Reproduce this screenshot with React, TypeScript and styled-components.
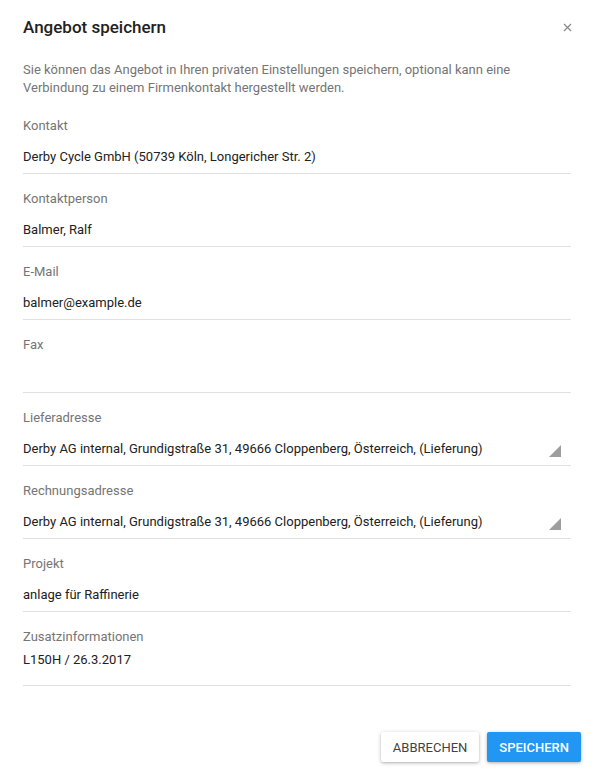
import React from 'react'
import styled, { createGlobalStyle } from 'styled-components'

const GlobalStyle = createGlobalStyle`
  html, body {
    margin: 0;
    padding: 0;
    background: #ffffff;
  }
  body {
    font-family: Roboto, 'Liberation Sans', Arial, sans-serif;
    -webkit-font-smoothing: antialiased;
  }
`

const Dialog = styled.div`
  width: 595px;
  height: 774px;
  box-sizing: border-box;
  background: #ffffff;
  display: flex;
  flex-direction: column;
`

const Header = styled.div`
  display: flex;
  align-items: center;
  justify-content: space-between;
  padding: 17px 22px 0 23px;
  height: 20px;
`

const Title = styled.h2`
  margin: 0;
  font-size: 17px;
  line-height: 20px;
  font-weight: 500;
  color: #212121;
`

const CloseButton = styled.button`
  border: none;
  background: none;
  padding: 0;
  width: 12px;
  height: 12px;
  display: flex;
  align-items: center;
  justify-content: center;
  cursor: pointer;
`

const Body = styled.div`
  padding: 24px 24px 0 23px;
  display: flex;
  flex-direction: column;
`

const Description = styled.p`
  margin: 0 0 21px;
  font-size: 13px;
  line-height: 18px;
  color: #757575;
`

const Field = styled.div`
  display: flex;
  flex-direction: column;
  margin-bottom: 17px;
`

const Label = styled.label`
  font-size: 13px;
  line-height: 16px;
  color: #757575;
`

const InputRow = styled.div<{ $multiline?: boolean }>`
  position: relative;
  margin-top: ${({ $multiline }) => ($multiline ? '6px' : '7px')};
  height: ${({ $multiline }) => ($multiline ? '34px' : '32px')};
  border-bottom: 1px solid #e0e0e0;
  display: flex;
  align-items: ${({ $multiline }) => ($multiline ? 'flex-start' : 'center')};
`

const Value = styled.span`
  font-size: 13px;
  line-height: 18px;
  color: #212121;
  white-space: nowrap;
`

const SelectArrow = styled.span`
  position: absolute;
  right: 10px;
  bottom: 8px;
  width: 0;
  height: 0;
  border-style: solid;
  border-width: 0 0 12px 12px;
  border-color: transparent transparent #9e9e9e transparent;
`

const Actions = styled.div`
  margin-top: auto;
  display: flex;
  justify-content: flex-end;
  gap: 8px;
  padding: 0 14px 12px 0;
`

const ActionButton = styled.button<{ $primary?: boolean }>`
  height: 30px;
  padding: 0 12px;
  border: none;
  border-radius: 2px;
  font-family: Roboto, 'Liberation Sans', Arial, sans-serif;
  font-size: 13px;
  font-weight: ${({ $primary }) => ($primary ? 500 : 400)};
  text-transform: uppercase;
  color: ${({ $primary }) => ($primary ? '#ffffff' : '#424242')};
  background: ${({ $primary }) => ($primary ? '#2196f3' : '#ffffff')};
  box-shadow: 0 1px 4px rgba(0, 0, 0, 0.22), 0 1px 2px rgba(0, 0, 0, 0.12);
  cursor: pointer;
`

type FieldData = {
  label: string
  value: string
  select?: boolean
  multiline?: boolean
}

const fields: FieldData[] = [
  { label: 'Kontakt', value: 'Derby Cycle GmbH (50739 Köln, Longericher Str. 2)' },
  { label: 'Kontaktperson', value: 'Balmer, Ralf' },
  { label: 'E-Mail', value: 'balmer@example.de' },
  { label: 'Fax', value: '' },
  {
    label: 'Lieferadresse',
    value: 'Derby AG internal, Grundigstraße 31, 49666 Cloppenberg, Österreich, (Lieferung)',
    select: true,
  },
  {
    label: 'Rechnungsadresse',
    value: 'Derby AG internal, Grundigstraße 31, 49666 Cloppenberg, Österreich, (Lieferung)',
    select: true,
  },
  { label: 'Projekt', value: 'anlage für Raffinerie' },
  { label: 'Zusatzinformationen', value: 'L150H / 26.3.2017', multiline: true },
]

export default function App() {
  return (
    <>
      <GlobalStyle />
      <Dialog>
        <Header>
          <Title>Angebot speichern</Title>
          <CloseButton aria-label="Schließen">
            <svg width="9" height="9" viewBox="0 0 9 9">
              <path d="M1 1 L8 8 M8 1 L1 8" stroke="#8a8a8a" strokeWidth="1.3" />
            </svg>
          </CloseButton>
        </Header>
        <Body>
          <Description>
            Sie können das Angebot in Ihren privaten Einstellungen speichern, optional kann eine
            Verbindung zu einem Firmenkontakt hergestellt werden.
          </Description>
          {fields.map((f) => (
            <Field key={f.label}>
              <Label>{f.label}</Label>
              <InputRow $multiline={f.multiline}>
                <Value>{f.value}</Value>
                {f.select && <SelectArrow />}
              </InputRow>
            </Field>
          ))}
        </Body>
        <Actions>
          <ActionButton>Abbrechen</ActionButton>
          <ActionButton $primary>Speichern</ActionButton>
        </Actions>
      </Dialog>
    </>
  )
}
